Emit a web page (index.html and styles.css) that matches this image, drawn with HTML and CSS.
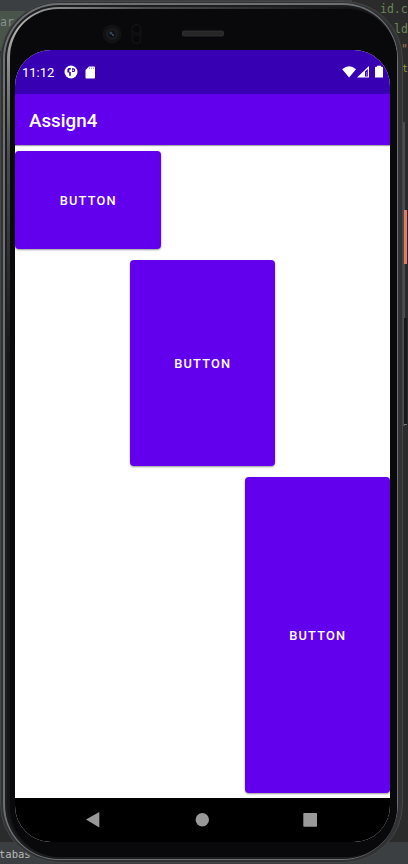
FILE: index.html
```html
<!DOCTYPE html>
<html lang="en">
<head>
<meta charset="utf-8">
<title>Assign4</title>
<link rel="stylesheet" href="styles.css">
</head>
<body>
<div class="desktop">
  <div class="strip-top"></div>
  <div class="strip-left"></div>
  <div class="strip-bottom"></div>
  <span class="code c1">ar</span>
  <span class="code c2">id.c</span>
  <span class="code c3">ld</span>
  <span class="code c4">"</span>
  <span class="code c5">t</span>
  <span class="code c6">tabas</span>
  <div class="rail"></div>
  <div class="power"></div>
  <div class="volume"></div>
</div>
<div class="phone">
  <div class="bezel">
    <div class="groove">
    <div class="shine">
    <div class="inner">
      <svg class="sensors" viewBox="0 0 140 24" width="140" height="24">
        <circle cx="12" cy="12" r="9.5" fill="#121213"/>
        <circle cx="12" cy="12" r="6" fill="#1a1b1d"/>
        <circle cx="12" cy="12" r="3.400" fill="#0c0e14"/>
        <circle cx="11" cy="11" r="1.500" fill="#34415c"/>
        <circle cx="13" cy="13" r=".8" fill="#7d8490"/>
        <rect x="32" y="2.500" width="9" height="19" rx="4" fill="#0e0e0f" stroke="#131314"/>
        <circle cx="36.500" cy="7" r="3" fill="#080809"/>
        <circle cx="36.500" cy="17" r="3" fill="#080809"/>
        <rect x="82" y="8.500" width="42" height="6" rx="2" fill="#2b2b2b"/>
        <rect x="84" y="10" width="38" height="3" rx="1" fill="#262626"/>
      </svg>
      <main class="screen">
        <div class="status">
          <span class="time">11:12</span>
          <svg class="app-icon" viewBox="0 0 14 14" width="14" height="14">
            <circle cx="7" cy="7" r="6.500" fill="#fff"/>
            <path d="M3.400 4.200 4.600 3h2.200v1.600H5.400v2.400h1.400v3.800H5.200V7.400H3.400zM8 3.300h1.300a1.900 1.900 0 0 1 0 3.800H8z" fill="#3700b3"/>
            <circle cx="9.200" cy="5.200" r=".8" fill="#fff"/>
          </svg>
          <svg class="sd" viewBox="0 0 11 13" width="11" height="13">
            <path d="M4 .5h5q1 0 1 1v10q0 1-1 1H1.500q-1 0-1-1V4z" fill="#fff"/>
            <path d="M4.500 1.500v1.500M6.500 1.500v1.500M8.500 1.500v1.500" stroke="#3700b3" stroke-width=".4"/>
          </svg>
          <svg class="signals" viewBox="0 0 42 14" width="42" height="14">
            <path d="M.2 4.200Q7-1.800 14 4.200L7.100 12.600z" fill="#fff"/>
            <path d="M15 12.500 27 1v11.500z" fill="#fff"/>
            <path d="M23 6.500 25.800 4v7.400H23z" fill="#3700b3"/>
            <path d="M24 7h1v4.300h-1z" fill="#8066d1"/>
            <path d="M35 .8h4v1h1q1 0 1 1v9.700h-8V2.800q0-1 1-1h1z" fill="#fff"/>
          </svg>
        </div>
        <header class="appbar">Assign4</header>
        <div class="content">
          <button class="btn b1">BUTTON</button>
          <button class="btn b2">BUTTON</button>
          <button class="btn b3">BUTTON</button>
        </div>
        <nav class="nav">
          <svg viewBox="0 0 375 44" width="375" height="44" fill="#999">
            <path d="M71 21.500 84.300 14v15.500z"/>
            <circle cx="187.300" cy="21.700" r="6.700"/>
            <rect x="288.300" y="15" width="13.700" height="13.800" rx=".8"/>
          </svg>
        </nav>
      </main>
    </div>
    </div>
    </div>
  </div>
</div>
</body>
</html>
```
FILE: styles.css
```css
* { box-sizing: border-box; }
body {
  margin: 0;
  width: 408px;
  height: 864px;
  overflow: hidden;
  position: relative;
  background: #2b2b2b;
  font-family: Roboto, sans-serif;
}
.desktop { position: absolute; inset: 0; overflow: hidden; }
.strip-top { position: absolute; left: 0; top: 0; width: 352px; height: 11px; background: #3c3f41; }
.strip-left { position: absolute; left: 0; top: 11px; width: 40px; height: 40px; background: #49544a; }
.strip-bottom { position: absolute; left: 0; right: 0; bottom: 0; height: 22px; background: #3c3f41; }
.code {
  position: absolute;
  font: 11.500px/14px "DejaVu Sans Mono", monospace;
  color: #6a8759;
  white-space: pre;
}
.c1 { left: 0; top: 15px; color: #87908a; }
.c2 { left: 380px; top: 2px; }
.c3 { left: 394px; top: 22px; }
.c4 { left: 401px; top: 42px; color: #a5774a; }
.c5 { left: 402px; top: 62px; color: #8a9a43; font-size: 10px; }
.c6 { left: -1px; top: 847px; color: #bbb; font-size: 10.500px; }
.rail { position: absolute; left: 403px; top: 122px; width: 5px; height: 304px; background: #28292b; border-left: 2px solid #4a4c4e; }
.power { position: absolute; left: 404px; top: 210px; width: 3px; height: 54px; background: #e77963; }
.volume { position: absolute; left: 404px; top: 318px; width: 3px; height: 107px; background: #17181a; border-bottom: 1px solid #777; }
.phone {
  position: absolute;
  left: 0;
  top: 1px;
  width: 403px;
  height: 862px;
  padding: 1px 4px 2px 2px;
  border-radius: 59px;
  background: #303234;
  border: 1px solid #444648;
}
.bezel {
  height: 100%;
  padding: 2px 1px 1px 2px;
  border-radius: 56px;
  background: #6e7073;
}
.groove {
  height: 100%;
  padding: 2px 0 2px 2px;
  border-radius: 54px;
  background: #1c1d1e;
}
.shine {
  height: 100%;
  padding: 2px 0 0 3px;
  border-radius: 52px;
  background: radial-gradient(circle at 12px 20px, #b5b5b3 0, #858685 45px, #4b4c4d 130px, #151516 330px);
}
.inner {
  height: 100%;
  border-radius: 48px 50px 50px 50px;
  background: #09090b;
  padding: 13px 0 0 5px;
  display: flex;
  flex-direction: column;
}
.sensors { margin-left: 85px; flex: none; }
.screen {
  width: 375px;
  height: 792px;
  margin-top: 4px;
  border-radius: 36px;
  overflow: hidden;
  background: #fff;
  display: flex;
  flex-direction: column;
  flex: none;
}
.status {
  height: 44px;
  flex: none;
  background: #3700b3;
  display: flex;
  align-items: center;
  padding: 0 6px 0 7px;
  color: #fff;
}
.time { font-size: 13px; width: 42px; }
.app-icon { margin-right: 7px; }
.signals { margin-left: auto; }
.appbar {
  height: 51px;
  flex: none;
  background: #6200ee;
  color: #fff;
  font-size: 18.800px;
  font-weight: 500;
  line-height: 54px;
  padding-left: 14px;
  position: relative;
  box-shadow: 0 1px 1px rgba(0,0,0,.35);
}
.content {
  flex: 1;
  display: flex;
  flex-direction: column;
  padding: 6px 0 5px;
  gap: 11.500px;
}
.btn {
  width: 145.500px;
  flex: none;
  border: 0;
  padding: 1px 0 0 1px;
  border-radius: 4px;
  background: #6200ee;
  color: #fff;
  font: 500 12.800px Roboto, sans-serif;
  letter-spacing: 1.150px;
  box-shadow: 0 1px 2px rgba(0,0,0,.4);
}
.b1 { height: 97.500px; }
.b2 { height: 205.500px; margin-left: 114.500px; }
.b3 { height: 315.500px; align-self: flex-end; }
.nav { height: 44px; flex: none; background: #000; }
.nav svg { display: block; }
```
